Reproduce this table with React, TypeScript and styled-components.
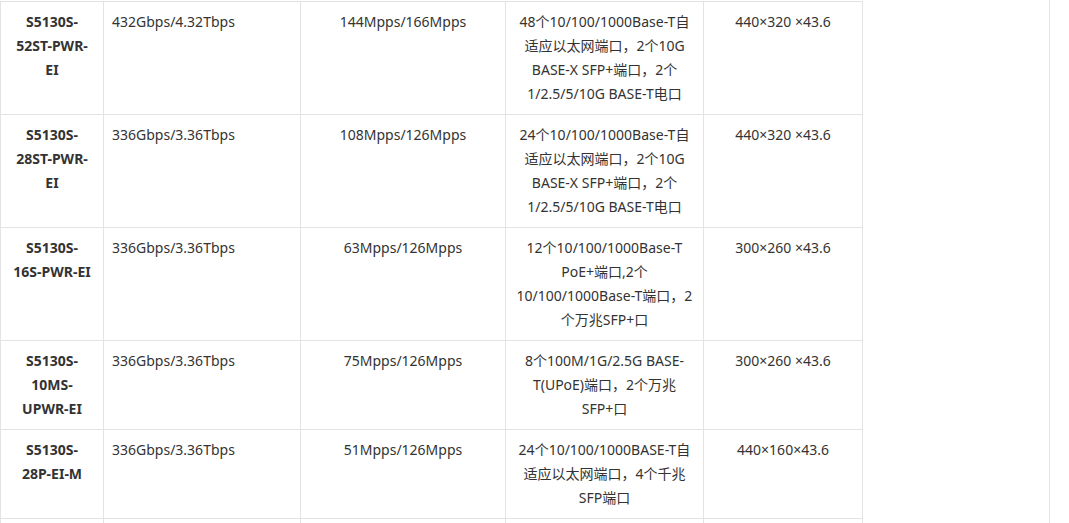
import React from "react";
import styled, { createGlobalStyle } from "styled-components";

const Global = createGlobalStyle`
  html, body { margin: 0; padding: 0; background: #fff; }
  body { overflow: hidden; }
`;

const Page = styled.div`
  width: 1050px;
  height: 523px;
  border-right: 1px solid #e3e3e3;
  box-sizing: border-box;
  padding-top: 1px;
  overflow: hidden;
  font-family: "Noto Sans", "Noto Sans CJK SC", sans-serif;
  font-size: 14px;
  color: #333;
`;

const Table = styled.table`
  border-collapse: collapse;
  table-layout: fixed;
  width: 863px;

  col:nth-child(1) { width: 103px; }
  col:nth-child(2) { width: 197px; }
  col:nth-child(3) { width: 205px; }
  col:nth-child(4) { width: 198px; }
  col:nth-child(5) { width: 159px; }
`;

const Cell = styled.td<{ $align?: "left" | "center"; $bold?: boolean }>`
  border: 1px solid #e3e3e3;
  padding: 8px;
  vertical-align: top;
  line-height: 24px;
  height: 24px;
  text-align: ${(p) => p.$align ?? "center"};
  font-weight: ${(p) => (p.$bold ? 700 : 400)};
  white-space: nowrap;
`;

type Row = { model: string[]; a: string; b: string; ports: string[]; size: string };

const rows: Row[] = [
  {
    model: ["S5130S-", "52ST-PWR-", "EI"],
    a: "432Gbps/4.32Tbps",
    b: "144Mpps/166Mpps",
    ports: ["48个10/100/1000Base-T自", "适应以太网端口，2个10G", "BASE-X SFP+端口，2个", "1/2.5/5/10G BASE-T电口"],
    size: "440×320 ×43.6",
  },
  {
    model: ["S5130S-", "28ST-PWR-", "EI"],
    a: "336Gbps/3.36Tbps",
    b: "108Mpps/126Mpps",
    ports: ["24个10/100/1000Base-T自", "适应以太网端口，2个10G", "BASE-X SFP+端口，2个", "1/2.5/5/10G BASE-T电口"],
    size: "440×320 ×43.6",
  },
  {
    model: ["S5130S-", "16S-PWR-EI"],
    a: "336Gbps/3.36Tbps",
    b: "63Mpps/126Mpps",
    ports: ["12个10/100/1000Base-T", "PoE+端口,2个", "10/100/1000Base-T端口，2", "个万兆SFP+口"],
    size: "300×260 ×43.6",
  },
  {
    model: ["S5130S-", "10MS-", "UPWR-EI"],
    a: "336Gbps/3.36Tbps",
    b: "75Mpps/126Mpps",
    ports: ["8个100M/1G/2.5G BASE-", "T(UPoE)端口，2个万兆", "SFP+口"],
    size: "300×260 ×43.6",
  },
  {
    model: ["S5130S-", "28P-EI-M"],
    a: "336Gbps/3.36Tbps",
    b: "51Mpps/126Mpps",
    ports: ["24个10/100/1000BASE-T自", "适应以太网端口，4个千兆", "SFP端口"],
    size: "440×160×43.6",
  },
  { model: [], a: "", b: "", ports: [], size: "" },
];

const Lines = ({ lines }: { lines: string[] }) => (
  <>
    {lines.map((l, i) => (
      <React.Fragment key={i}>
        {i > 0 && <br />}
        {l}
      </React.Fragment>
    ))}
  </>
);

export default function App() {
  return (
    <Page>
      <Global />
      <Table>
        <colgroup>
          <col />
          <col />
          <col />
          <col />
          <col />
        </colgroup>
        <tbody>
          {rows.map((r, i) => (
            <tr key={i}>
              <Cell $bold>
                <Lines lines={r.model} />
              </Cell>
              <Cell $align="left">{r.a}</Cell>
              <Cell>{r.b}</Cell>
              <Cell>
                <Lines lines={r.ports} />
              </Cell>
              <Cell>{r.size}</Cell>
            </tr>
          ))}
        </tbody>
      </Table>
    </Page>
  );
}
